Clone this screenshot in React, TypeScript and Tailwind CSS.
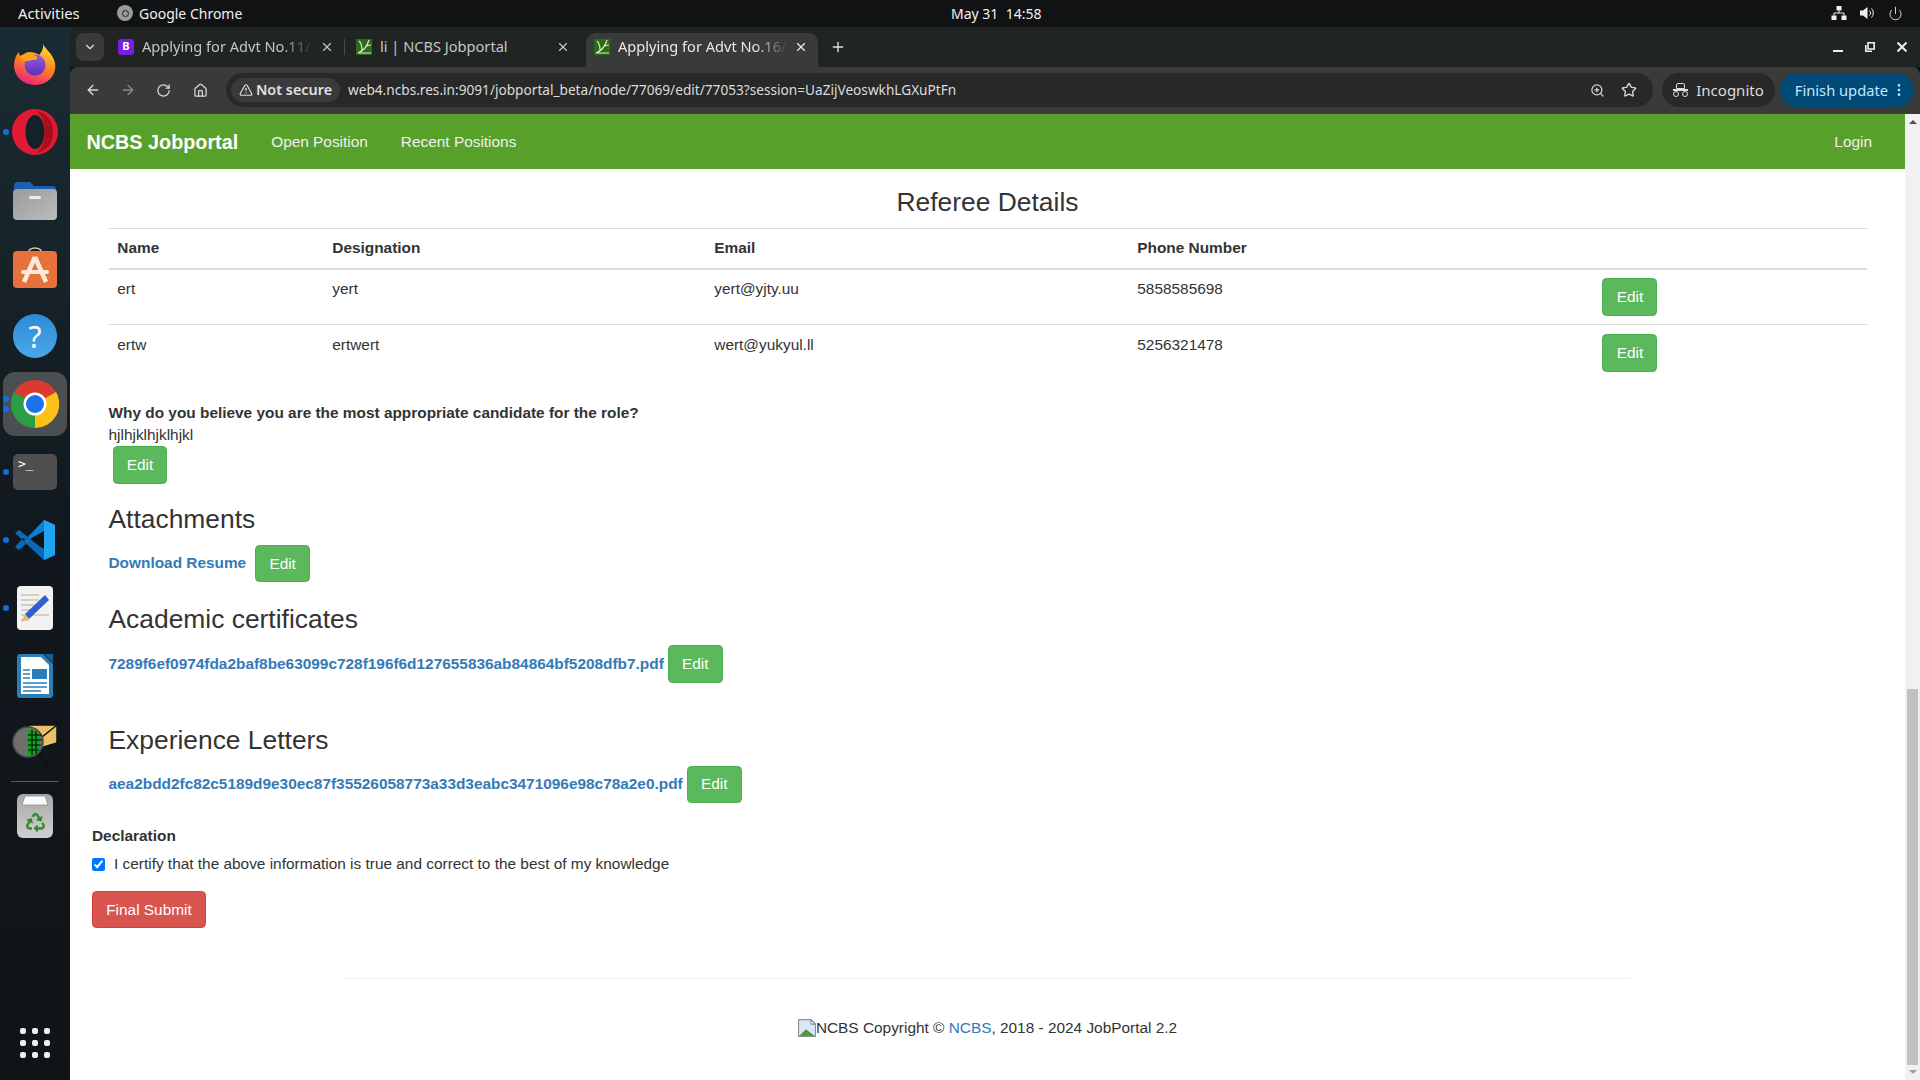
import { ArrowLeft, ArrowRight, RotateCw, Home, Star, ZoomIn, TriangleAlert, ChevronDown, X, Plus, Power, EllipsisVertical } from "lucide-react";
import { FaRecycle } from "react-icons/fa";

const uiFont = "font-['Noto_Sans',sans-serif]";

const FireFoxIcon = () => (
  <svg width="44" height="44" viewBox="0 0 44 44">
    <defs>
      <linearGradient id="ff" x1="0.7" y1="0" x2="0.3" y2="1">
        <stop offset="0" stopColor="#ffe13a" />
        <stop offset="0.45" stopColor="#ff8a1f" />
        <stop offset="1" stopColor="#ea1f7a" />
      </linearGradient>
      <linearGradient id="ffp" x1="0" y1="0" x2="0" y2="1">
        <stop offset="0" stopColor="#9a5be0" />
        <stop offset="1" stopColor="#5a2fb8" />
      </linearGradient>
    </defs>
    <path d="M30 1c1 6 10 10 12 20 2 13-8 22-20 22S1 34 1 23c0-5 2-10 5-13 0 2 1 4 2 5 2-3 5-5 9-5 5 0 9 3 9 3 3-3 5-8 4-12z" fill="url(#ff)" />
    <circle cx="22" cy="23" r="10.5" fill="url(#ffp)" />
    <path d="M7 14c5-3 11-3 16 0 3 2 1 4-3 4-5 0-8 3-11 0z" fill="#ffa11f" />
  </svg>
);

const OperaIcon = () => (
  <svg width="46" height="46" viewBox="0 0 46 46">
    <circle cx="23" cy="23" r="23" fill="#e01a32" />
    <ellipse cx="23" cy="23" rx="9.5" ry="17" fill="#15212a" />
    <path d="M24 2c11 2 17 10 17 21s-6 19-17 21c6-3 9-11 9-21S30 5 24 2z" fill="#a5101f" />
  </svg>
);

const FilesIcon = () => (
  <svg width="44" height="40" viewBox="0 0 44 40">
    <defs>
      <linearGradient id="fold" x1="0" y1="0" x2="1" y2="1">
        <stop offset="0" stopColor="#9a9a9a" />
        <stop offset="1" stopColor="#bcbcbc" />
      </linearGradient>
    </defs>
    <path d="M1 6q0-4 4-4h12l4 4h19q3 0 3 4v10H1z" fill="#1a5fb4" />
    <rect x="0" y="9" width="44" height="31" rx="4" fill="url(#fold)" />
    <rect x="16" y="16" width="12" height="3" rx="1.5" fill="#eeeeee" />
  </svg>
);

const StoreIcon = () => (
  <svg width="44" height="44" viewBox="0 0 44 44">
    <path d="M15 8c0-8 14-8 14 0" fill="none" stroke="#e8c9a0" strokeWidth="1.6" />
    <rect x="0" y="5" width="44" height="37" rx="4" fill="#e8703a" />
    <path d="M22 11 L11 36 M22 11 L33 36" stroke="#fde9dc" strokeWidth="4.5" />
    <rect x="8" y="24" width="28" height="4" rx="2" fill="#fde9dc" />
  </svg>
);

const ChromeIcon = () => (
  <svg width="48" height="48" viewBox="0 0 48 48">
    <circle cx="24" cy="24" r="24" fill="#db3a2f" />
    <path d="M24 24 L45 12 A24 24 0 0 1 24 48 Z" fill="#fbc116" />
    <path d="M24 24 L24 48 A24 24 0 0 1 3 12 Z" fill="#2a9d47" />
    <circle cx="24" cy="24" r="11.5" fill="#ffffff" />
    <circle cx="24" cy="24" r="9" fill="#1a73e8" />
  </svg>
);

const VsCodeIcon = () => (
  <svg width="42" height="42" viewBox="0 0 42 42">
    <path d="M30 1 L41 6 V36 L30 41 L10 22 L30 1z" fill="#0f7fd1" />
    <path d="M30 1 L41 6 V36 L30 41z" fill="#22a3f0" />
    <path d="M30 12 L14 21 L30 30z" fill="#0f1417" />
    <path d="M1 14 L5 11 L30 31 V41 Z M1 28 L5 31 L14 23 L9 19z" fill="#0a6ab5" />
  </svg>
);

const WriterNoteIcon = () => (
  <svg width="36" height="44" viewBox="0 0 36 44">
    <rect width="36" height="44" rx="4" fill="#f2f2f2" />
    <path d="M4 9h18M4 14h18M4 19h16M4 24h12M4 29h28M4 34h8" stroke="#c9c4b4" strokeWidth="1.6" />
    <path d="M28 9 L32 14 L12 33 L8 28z" fill="#2f5fd0" />
    <path d="M8 28 L12 33 L4 36z" fill="#e8b878" />
  </svg>
);

const LibreIcon = () => (
  <svg width="36" height="44" viewBox="0 0 36 44">
    <path d="M3 0h23l10 10v31q0 3-3 3H3q-3 0-3-3V3q0-3 3-3z" fill="#2a7fb8" />
    <path d="M4 3h20l8 8v29H4z" fill="#ffffff" />
    <path d="M27 0l9 9v-9z" fill="#1a5f8f" />
    <rect x="15" y="15" width="15" height="10" fill="#2a7fb8" />
    <path d="M6 16h7M6 20h7M6 24h7M6 29h24M6 33h24M6 37h18" stroke="#2a7fb8" strokeWidth="1.7" />
  </svg>
);

const MailScanIcon = () => (
  <svg width="46" height="46" viewBox="0 0 46 46" className="translate-y-[2px]">
    <path d="M15 2 H45 V20 L25 26z" fill="#e8c266" stroke="#111" strokeWidth="1.5" />
    <path d="M15 2 L30 14 L45 2" fill="none" stroke="#111" strokeWidth="1.5" />
    <circle cx="16" cy="19" r="15" fill="#6f6f6f" stroke="#4a4a4a" strokeWidth="1.5" />
    <path d="M16 6a13 13 0 0 1 12 8 V26 A14 14 0 0 1 16 33z" fill="#0aa81a" />
    <path d="M20 7v25M24 8v23M16 12h14M16 17h14M16 22h13M16 27h11" stroke="#000" strokeWidth="1" />
    <path d="M27 32 L38 45" stroke="#111" strokeWidth="2.5" />
  </svg>
);

const TrashIcon = () => (
  <div className="flex h-[44px] w-[36px] flex-col items-center rounded-[6px] bg-gradient-to-b from-[#a8a8a8] to-[#d0d0d0]">
    <svg width="36" height="14" viewBox="0 0 36 14">
      <path d="M5 11 L8 2 H28 L31 11z" fill="#fafafa" stroke="#777" strokeWidth="0.6" />
    </svg>
    <FaRecycle size={19} className="mt-[5px] text-[#2e8b2e]" />
  </div>
);

const Favicon = () => (
  <svg width="16" height="16" viewBox="0 0 16 16" className="shrink-0">
    <rect width="16" height="16" fill="#2d6a1e" />
    <path d="M2 14 C7 12 11 8 13 1 M6 11 C6 7 5 4 3 2 M9 9 C10 7 11 6 15 6 M2 14 H15" stroke="#d8ecc0" strokeWidth="1.2" fill="none" />
  </svg>
);

const BrokenImage = () => (
  <svg width="18" height="18" viewBox="0 0 16 16" className="shrink-0">
    <path d="M.5.5h11l4 4v11H.5z" fill="#dbe8fb" stroke="#8f8f8f" />
    <path d="M1 15 L7 9 L15 15z" fill="#4f9a2e" />
    <path d="M11.5.5v4h4z" fill="#ffffff" stroke="#8f8f8f" />
  </svg>
);

const DockSlot = ({ children, dots = 0, active = false }: { children: React.ReactNode; dots?: number; active?: boolean }) => (
  <div className="relative flex h-[68px] w-full items-center justify-center">
    {active && <div className="absolute left-[3px] top-[2px] h-[64px] w-[64px] rounded-xl bg-[#4b4f52]" />}
    <div className="absolute left-[3px] top-1/2 flex -translate-y-1/2 flex-col gap-[4px]">
      {Array.from({ length: dots }).map((_, i) => (
        <span key={i} className="z-10 h-[6px] w-[6px] rounded-full bg-[#0f6fe0]" />
      ))}
    </div>
    <div className="relative flex items-center justify-center">{children}</div>
  </div>
);

const Dock = () => (
  <aside className="flex w-[70px] shrink-0 flex-col items-center bg-gradient-to-b from-[#1a2c33] via-[#11181d] to-[#101417] pt-[3px]">
    <DockSlot><FireFoxIcon /></DockSlot>
    <DockSlot dots={1}><OperaIcon /></DockSlot>
    <DockSlot><FilesIcon /></DockSlot>
    <DockSlot><StoreIcon /></DockSlot>
    <DockSlot>
      <div className={`flex h-[44px] w-[44px] items-center justify-center rounded-full bg-gradient-to-b from-[#2a8bd8] to-[#4aa8e8] text-[30px] text-white ${uiFont}`}>?</div>
    </DockSlot>
    <DockSlot dots={2} active><ChromeIcon /></DockSlot>
    <DockSlot dots={1}>
      <div className="h-[36px] w-[44px] rounded-[5px] bg-[#4f4f4f] pl-[5px] font-['DejaVu_Sans_Mono',monospace] text-[13px] leading-[20px] text-white">&gt;_</div>
    </DockSlot>
    <DockSlot dots={1}><VsCodeIcon /></DockSlot>
    <DockSlot dots={1}><WriterNoteIcon /></DockSlot>
    <DockSlot><LibreIcon /></DockSlot>
    <DockSlot><MailScanIcon /></DockSlot>
    <div className="mt-[3px] h-px w-[48px] bg-[#555a5e]" />
    <DockSlot><TrashIcon /></DockSlot>
    <div className="mt-auto mb-[22px] grid grid-cols-3 gap-x-[6px] gap-y-[6px]">
      {Array.from({ length: 9 }).map((_, i) => (
        <span key={i} className="h-[6px] w-[6px] rounded-[2px] bg-[#eeeeee]" />
      ))}
    </div>
  </aside>
);

const TopBar = () => (
  <header className={`flex h-[27px] shrink-0 items-center bg-[#111213] pb-[1px] text-[14px] text-[#f0f0f0] ${uiFont}`}>
    <span className="ml-[18px] w-[99px] text-[14.8px]">Activities</span>
    <span className="flex w-[834px] items-center gap-[6px]">
      <span className="flex h-[16px] w-[16px] items-center justify-center rounded-full bg-[#9a9a9a]">
        <span className="h-[7px] w-[7px] rounded-full border border-[#222]" />
      </span>
      Google Chrome
    </span>
    <span className="text-[14px]">May 31&nbsp;&nbsp;14:58</span>
    <div className="ml-auto mr-[17px] flex items-center gap-[13px]">
      <svg width="16" height="14" viewBox="0 0 16 14" fill="#f0f0f0">
        <rect x="5.5" y="0" width="5" height="4.5" />
        <rect x="0.5" y="9.5" width="5" height="4.5" />
        <rect x="10.5" y="9.5" width="5" height="4.5" />
        <path d="M8 4.5v2.5M3 9.5V7h10v2.5" fill="none" stroke="#f0f0f0" />
      </svg>
      <svg width="15" height="14" viewBox="0 0 15 14">
        <path d="M0 4.5h3L7.5 1v12L3 9.5H0z" fill="#f0f0f0" />
        <path d="M9.5 4.5a3.5 3.5 0 0 1 0 5M11.5 2.5a6.5 6.5 0 0 1 0 9" fill="none" stroke="#f0f0f0" strokeWidth="1" />
      </svg>
      <Power size={15} strokeWidth={1.4} />
    </div>
  </header>
);

type TabProps = { title: string; fade?: boolean; active?: boolean; width: string; icon: React.ReactNode };

const Tab = ({ title, fade, active, width, icon }: TabProps) => (
  <div className={`flex h-[34px] items-center rounded-t-[9px] pb-[7px] pl-[8px] pr-[10px] ${width} ${active ? "bg-[#3a3a3a]" : ""}`}>
    {icon}
    <span className={`ml-[8px] mr-[6px] flex-1 overflow-hidden whitespace-nowrap text-[14.6px] ${active ? "text-[#e8e8e8]" : "text-[#c4c7c5]"} ${fade ? "[mask-image:linear-gradient(to_right,black_80%,transparent)]" : ""}`}>{title}</span>
    <X size={14} className={active ? "text-[#e8e8e8]" : "text-[#c4c7c5]"} />
  </div>
);

const ChromeBars = () => (
  <div className={uiFont}>
    {/* tab strip */}
    <div className="flex h-[40px] items-end bg-[#202423] pl-[6px]">
      <div className="mb-[6px] flex h-[28px] w-[28px] items-center justify-center rounded-lg bg-[#3a3a3a] text-[#e0e0e0]">
        <ChevronDown size={14} />
      </div>
      <div className="ml-[6px] flex items-end">
        <Tab
          title="Applying for Advt No.11/"
          fade
          width="w-[234px]"
          icon={<span className="flex h-[16px] w-[16px] shrink-0 items-center justify-center rounded-[3px] bg-[#7a1fe0] text-[11px] font-bold text-white">B</span>}
        />
        <div className="mb-[12px] mr-[3px] h-[16px] w-px bg-[#4a4a4a]" />
        <Tab title="li | NCBS Jobportal" width="w-[232px]" icon={<Favicon />} />
        <div className="w-[6px]" />
        <Tab title="Applying for Advt No.16/" fade active width="w-[232px]" icon={<Favicon />} />
      </div>
      <Plus size={16} className="mb-[12px] ml-[12px] text-[#e0e0e0]" />
      <div className="mb-[15px] ml-auto mr-[13px] flex items-center gap-[22px]">
        <svg width="10" height="10" viewBox="0 0 10 10">
          <rect x="0" y="8" width="10" height="2" fill="#f0f0f0" />
        </svg>
        <svg width="10" height="10" viewBox="0 0 10 10" fill="none" stroke="#f0f0f0" strokeWidth="1.6">
          <path d="M3 .8h6.2v6.2H3z" />
          <path d="M.8 3v6.2H7" />
        </svg>
        <svg width="10" height="10" viewBox="0 0 10 10" stroke="#f0f0f0" strokeWidth="2">
          <path d="M.5.5l9 9M9.5.5l-9 9" />
        </svg>
      </div>
    </div>
    {/* toolbar */}
    <div className="flex h-[47px] items-center rounded-t-lg bg-[#3a3a3a] pb-[1px] pl-[15px] pr-[6px] text-[#d8d8d8]">
      <ArrowLeft size={16} />
      <ArrowRight size={16} className="ml-[19px] text-[#8a8a8a]" />
      <RotateCw size={15} className="ml-[20px]" />
      <Home size={15} className="ml-[22px]" />
      <div className="ml-[18px] flex h-[34px] w-[1427px] items-center rounded-full bg-[#282828] pl-[5px] pr-[16.5px]">
        <div className="flex h-[24px] w-[109px] items-center justify-center gap-[3px] rounded-full bg-[#3a3a3a] text-[14.4px] font-semibold text-[#e0e0e0]">
          <TriangleAlert size={14} />
          Not secure
        </div>
        <span className="ml-[8px] whitespace-nowrap text-[13.65px] text-[#dcdcdc]">web4.ncbs.res.in:9091/jobportal_beta/node/77069/edit/77053?session=UaZijVeoswkhLGXuPtFn</span>
        <ZoomIn size={15} className="ml-auto" />
        <Star size={16} className="ml-[16px]" />
      </div>
      <div className="ml-[9px] flex h-[34px] w-[113px] items-center justify-center gap-[8px] rounded-full bg-[#282828] text-[15px] text-[#dcdcdc]">
        <span className="relative block h-[14px] w-[15px]">
          <span className="absolute left-[3px] top-0 h-[6px] w-[9px] rounded-t-[2px] border border-[#dcdcdc]" />
          <span className="absolute left-0 top-[6px] h-[1.5px] w-[15px] bg-[#dcdcdc]" />
          <span className="absolute bottom-0 left-0 h-[6px] w-[6px] rounded-full border border-[#dcdcdc]" />
          <span className="absolute bottom-0 right-0 h-[6px] w-[6px] rounded-full border border-[#dcdcdc]" />
        </span>
        Incognito
      </div>
      <div className="ml-[5px] flex h-[34px] w-[134px] items-center justify-end gap-[3px] rounded-full bg-[#004a77] pr-[7px] text-[14.7px] text-[#c2e7ff]">
        Finish update
        <EllipsisVertical size={16} />
      </div>
    </div>
  </div>
);

const EditButton = ({ className = "" }: { className?: string }) => (
  <button className={`h-[37.4px] rounded-[4.4px] border border-[#4cae4c] bg-[#5cb85c] px-[13.2px] text-[15.4px] text-white ${className}`}>Edit</button>
);

const referees = [
  { name: "ert", designation: "yert", email: "yert@yjty.uu", phone: "5858585698" },
  { name: "ertw", designation: "ertwert", email: "wert@yukyul.ll", phone: "5256321478" },
];

const RefereeTable = () => (
  <table className="ml-[38.5px] w-[1758.5px] table-fixed border-t border-[#dddddd]">
    <thead>
      <tr className="h-[40px] border-b-2 border-[#dddddd] text-left font-bold">
        <th className="w-[215px] px-[8.8px]">Name</th>
        <th className="w-[382px] px-[8.8px]">Designation</th>
        <th className="w-[423px] px-[8.8px]">Email</th>
        <th className="w-[464.5px] px-[8.8px]">Phone Number</th>
        <th />
      </tr>
    </thead>
    <tbody>
      {referees.map((r) => (
        <tr key={r.email} className="border-t border-[#dddddd] first:border-t-0">
          <td className="px-[8.8px] pt-[8.8px] pb-[8.8px] align-top">{r.name}</td>
          <td className="px-[8.8px] pt-[8.8px] pb-[8.8px] align-top">{r.designation}</td>
          <td className="px-[8.8px] pt-[8.8px] pb-[8.8px] align-top">{r.email}</td>
          <td className="px-[8.8px] pt-[8.8px] pb-[8.8px] align-top">{r.phone}</td>
          <td className="px-[8.8px] pt-[8.8px] pb-[8.8px] align-top"><EditButton className="ml-[0.7px] block" /></td>
        </tr>
      ))}
    </tbody>
  </table>
);

const PageContent = () => (
  <div className="flex-1 overflow-hidden bg-white font-['Liberation_Sans',sans-serif] text-[15.4px] leading-[22px] text-[#333333]">
    <nav className="flex h-[55px] items-center bg-[#57a12b] pl-[16.5px] pr-[33px] text-[#f0f0f0]">
      <span className="text-[19.8px] font-bold text-white">NCBS Jobportal</span>
      <span className="ml-[33px]">Open Position</span>
      <span className="ml-[33px]">Recent Positions</span>
      <span className="ml-auto">Login</span>
    </nav>

    <h3 className="mt-[19px] text-center text-[26.4px] leading-[29px]">Referee Details</h3>
    <div className="mt-[11px]"><RefereeTable /></div>

    <div className="ml-[38.5px] mt-[22px]">
      <p className="font-bold">Why do you believe you are the most appropriate candidate for the role?</p>
      <p>hjlhjklhjklhjkl</p>
      <EditButton className="ml-[4px] block" />
    </div>

    <section className="ml-[38.5px] mt-[21px]">
      <h3 className="text-[26.4px] leading-[29px]">Attachments</h3>
      <div className="mt-[11px] flex items-center gap-[9px]">
        <a className="-translate-y-[1px] font-bold text-[#337ab7]">Download Resume</a>
        <EditButton />
      </div>
    </section>

    <section className="ml-[38.5px] mt-[23px]">
      <h3 className="text-[26.4px] leading-[29px]">Academic certificates</h3>
      <div className="mt-[11px] flex items-center gap-[4px]">
        <a className="font-bold text-[#337ab7]">7289f6ef0974fda2baf8be63099c728f196f6d127655836ab84864bf5208dfb7.pdf</a>
        <EditButton />
      </div>
    </section>

    <section className="ml-[38.5px] mt-[43px]">
      <h3 className="text-[26.4px] leading-[29px]">Experience Letters</h3>
      <div className="mt-[11px] flex items-center gap-[4px]">
        <a className="font-bold text-[#337ab7]">aea2bdd2fc82c5189d9e30ec87f35526058773a33d3eabc3471096e98c78a2e0.pdf</a>
        <EditButton />
      </div>
    </section>

    <section className="ml-[22px] mt-[22px]">
      <p className="font-bold">Declaration</p>
      <label className="mt-[6px] flex items-center gap-[9px]">
        <input type="checkbox" defaultChecked className="h-[13px] w-[13px] accent-[#0075ff]" />
        I certify that the above information is true and correct to the best of my knowledge
      </label>
      <button className="mt-[16px] block h-[37.4px] rounded-[4.4px] border border-[#d43f3a] bg-[#d9534f] px-[13.2px] text-[15.4px] text-white">Final Submit</button>
    </section>

    <hr className="mx-auto mt-[50px] w-[1287px] border-[#eeeeee]" />

    <footer className="mt-[38px] flex items-center justify-center">
      <BrokenImage />
      <span>NCBS Copyright © <a className="text-[#337ab7]">NCBS</a>, 2018 - 2024 JobPortal 2.2</span>
    </footer>
  </div>
);

const Scrollbar = () => (
  <div className="flex w-[15px] shrink-0 flex-col items-center bg-[#f1f1f1] pt-[6px]">
    <span className="h-0 w-0 border-x-[4px] border-b-[4px] border-x-transparent border-b-[#505050]" />
    <div className="mt-[565px] h-[376px] w-[11px] bg-[#c1c1c1]" />
    <span className="mt-[5px] h-0 w-0 border-x-[4px] border-t-[4px] border-x-transparent border-t-[#a0a0a0]" />
  </div>
);

export default function App() {
  return (
    <div className="flex h-screen w-full flex-col overflow-hidden bg-[#111213]">
      <TopBar />
      <div className="flex min-h-0 flex-1">
        <Dock />
        <div className="flex min-w-0 flex-1 flex-col">
          <ChromeBars />
          <div className="flex min-h-0 flex-1">
            <PageContent />
            <Scrollbar />
          </div>
        </div>
      </div>
    </div>
  );
}
